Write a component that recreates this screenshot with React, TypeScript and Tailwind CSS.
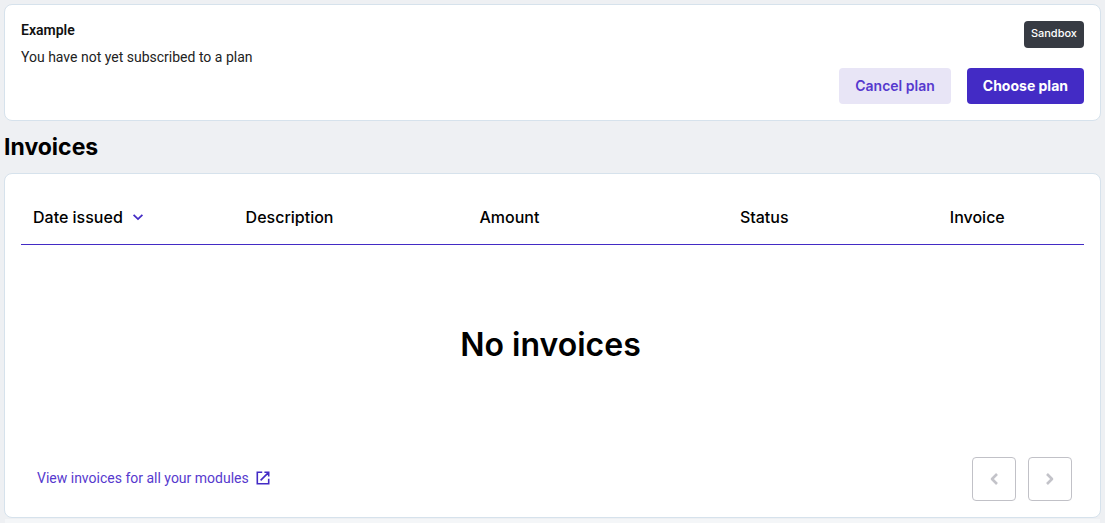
import React from "react";

const columns = [
  { label: "Description", width: "w-[22%]" },
  { label: "Amount", width: "w-[24.5%]" },
  { label: "Status", width: "w-[19.75%]" },
  { label: "Invoice", width: "w-[13.75%]" },
];

function SortIcon() {
  return (
    <svg viewBox="0 0 20 20" className="size-5 text-[#432bc5]" fill="none" stroke="currentColor" strokeWidth="1.8" aria-hidden="true">
      <polyline points="5.6,7.9 10,12.1 14.4,7.9" />
    </svg>
  );
}

function OpenIcon() {
  return (
    <svg viewBox="0 0 18 18" className="size-[18px] text-[#432bc5]" fill="none" stroke="currentColor" strokeWidth="1.6" aria-hidden="true">
      <path d="M8.2 3.3H3.3v11.4h11.4V9.8M10.4 3.3h4.3v4.3M14.4 3.6 6.6 11.4" />
    </svg>
  );
}

function PageButton({ label, points }: { label: string; points: string }) {
  return (
    <button
      type="button"
      aria-label={label}
      disabled
      className="flex size-11 items-center justify-center rounded border border-[#c1c1c7] bg-white text-[#c3c3c9]"
    >
      <svg
        viewBox="0 0 16 16"
        className="size-4"
        fill="none"
        stroke="currentColor"
        strokeWidth="2.6"
        strokeLinejoin="round"
        aria-hidden="true"
      >
        <polyline points={points} />
      </svg>
    </button>
  );
}

function PlanCard() {
  return (
    <section className="flex justify-between rounded-lg border border-[#d6e2ec] bg-white p-4">
      <div className="font-[Roboto,sans-serif] text-sm">
        <h1 className="leading-[18px] font-semibold text-[#111]">Example</h1>
        <p className="mt-2 leading-5 text-[#222]">You have not yet subscribed to a plan</p>
      </div>
      <div className="flex flex-col items-end gap-5">
        <span className="rounded bg-[#373b43] px-[7px] pt-1 pb-[7px] text-[11px] leading-4 font-medium text-white">
          Sandbox
        </span>
        <div className="flex gap-4 text-sm leading-5">
          <button type="button" className="rounded bg-[#e8e5f6] px-4 py-2 font-semibold text-[#5639ce]">
            Cancel plan
          </button>
          <button type="button" className="rounded bg-[#432bc5] px-4 py-2 font-bold text-white">
            Choose plan
          </button>
        </div>
      </div>
    </section>
  );
}

function InvoicesCard() {
  return (
    <section className="rounded-lg border border-[#d6e2ec] bg-white p-4">
      <table className="w-full table-fixed border-separate border-spacing-0 text-left text-base">
        <thead>
          <tr className="h-[55px]">
            <th scope="col" className="w-[20%] border-b border-[#432bc5] px-3 font-medium">
              <button type="button" className="flex items-center gap-[5px] font-medium">
                Date issued
                <SortIcon />
              </button>
            </th>
            {columns.map((c) => (
              <th key={c.label} scope="col" className={`${c.width} border-b border-[#432bc5] px-3 font-medium`}>
                {c.label}
              </th>
            ))}
          </tr>
        </thead>
        <tbody>
          <tr>
            <td colSpan={5} className="h-[200px] pr-1 text-center text-[32px] leading-10 font-semibold">
              No invoices
            </td>
          </tr>
        </tbody>
      </table>
      <div className="flex items-center justify-between pt-3 pr-3 pl-4">
        <a href="#modules" className="flex items-center gap-[5px] pb-0.5 font-[Roboto,sans-serif] text-sm text-[#5639ce]">
          View invoices for all your modules
          <OpenIcon />
        </a>
        <nav aria-label="Invoice pages" className="flex gap-3">
          <PageButton label="Previous page" points="11,3 6,8 11,13" />
          <PageButton label="Next page" points="5,3 10,8 5,13" />
        </nav>
      </div>
    </section>
  );
}

export default function App() {
  return (
    <main className="min-h-screen bg-[#eef0f3] px-1 pt-1 font-[Inter,sans-serif] text-black">
      <PlanCard />
      <h2 className="pt-2.5 pb-2.5 text-[23px] leading-8 font-bold">Invoices</h2>
      <InvoicesCard />
      <div className="mx-px mt-px h-1 bg-[#f4f6f8]" />
    </main>
  );
}
